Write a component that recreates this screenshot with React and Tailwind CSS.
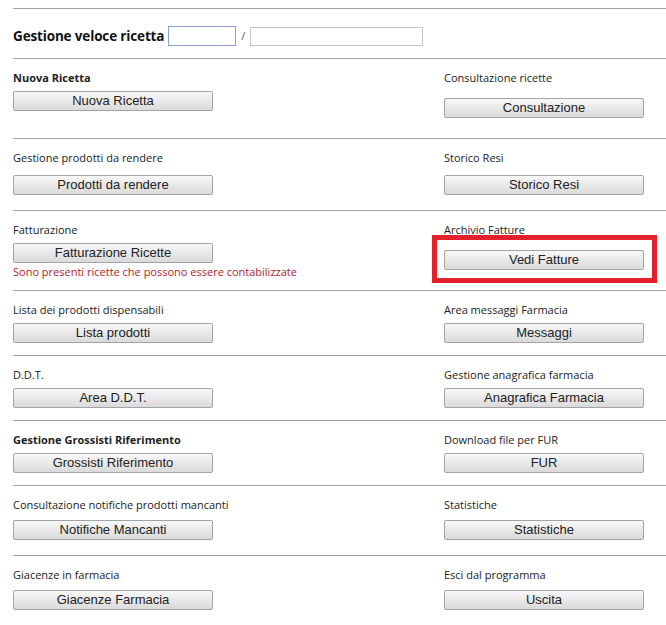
import React from "react";

const rows = [
  {
    h: "h-[80px]",
    left: { label: "Nuova Ricetta", bold: true, btn: "Nuova Ricetta", mt: "mt-[6px]" },
    right: { label: "Consultazione ricette", btn: "Consultazione", mt: "mt-[13px]" },
  },
  {
    h: "h-[72px]",
    left: { label: "Gestione prodotti da rendere", btn: "Prodotti da rendere", mt: "mt-[10px]" },
    right: { label: "Storico Resi", btn: "Storico Resi", mt: "mt-[10px]" },
  },
  {
    h: "h-[80px]",
    left: {
      label: "Fatturazione",
      btn: "Fatturazione Ricette",
      mt: "mt-[6px]",
      note: "Sono presenti ricette che possono essere contabilizzate",
    },
    right: { label: "Archivio Fatture", btn: "Vedi Fatture", mt: "mt-[13px]" },
    highlight: true,
  },
  {
    h: "h-[65px]",
    left: { label: "Lista dei prodotti dispensabili", btn: "Lista prodotti", mt: "mt-[6px]" },
    right: { label: "Area messaggi Farmacia", btn: "Messaggi", mt: "mt-[6px]" },
  },
  {
    h: "h-[65px]",
    left: { label: "D.D.T.", btn: "Area D.D.T.", mt: "mt-[6px]" },
    right: { label: "Gestione anagrafica farmacia", btn: "Anagrafica Farmacia", mt: "mt-[6px]" },
  },
  {
    h: "h-[65px]",
    left: { label: "Gestione Grossisti Riferimento", bold: true, btn: "Grossisti Riferimento", mt: "mt-[6px]" },
    right: { label: "Download file per FUR", btn: "FUR", mt: "mt-[6px]" },
  },
  {
    h: "h-[70px]",
    left: { label: "Consultazione notifiche prodotti mancanti", btn: "Notifiche Mancanti", mt: "mt-[8px]" },
    right: { label: "Statistiche", btn: "Statistiche", mt: "mt-[8px]" },
  },
  {
    h: "h-[70px]",
    left: { label: "Giacenze in farmacia", btn: "Giacenze Farmacia", mt: "mt-[8px]" },
    right: { label: "Esci dal programma", btn: "Uscita", mt: "mt-[8px]" },
  },
];

function Btn({ children, mt }) {
  return (
    <div
      className={`${mt} w-[200px] h-[20px] flex items-center justify-center border border-[#a3a3a3] rounded-[2px] bg-gradient-to-b from-[#f8f8f8] to-[#dadada] text-[13px] leading-[18px] text-[#222] font-['Liberation_Sans',Arial,sans-serif]`}
    >
      {children}
    </div>
  );
}

function Cell({ c }) {
  return (
    <div className="flex flex-col items-start">
      <div
        className={`text-[11px] leading-[14px] text-[#222] ${c.bold ? "font-bold" : "font-normal"}`}
      >
        {c.label}
      </div>
      <Btn mt={c.mt}>{c.btn}</Btn>
      {c.note && (
        <div className="mt-[2px] text-[11px] leading-[14px] text-[#b0232a]">{c.note}</div>
      )}
    </div>
  );
}

export default function App() {
  return (
    <div className="w-[666px] h-[625px] overflow-hidden bg-white pt-[8px] pl-[13px] font-['Open_Sans',sans-serif]">
      <div className="h-[50px] border-t border-[#a0a0a0] pt-[17px]">
        <div className="flex items-center h-[20px]">
          <span className="text-[13.5px] tracking-[-0.15px] font-bold text-[#111] leading-[20px]">
            Gestione veloce ricetta
          </span>
          <input
            type="text"
            className="ml-[4px] w-[68px] h-[20px] border border-[#89a3d6] bg-white outline-none"
          />
          <span className="mx-[5px] text-[11px] text-[#555]">/</span>
          <input
            type="text"
            className="w-[173px] h-[19px] border border-[#c4c4c4] bg-white outline-none"
          />
        </div>
      </div>
      {rows.map((r, i) => (
        <div
          key={i}
          className={`${r.h} relative border-t border-[#a0a0a0] pt-[12px] grid grid-cols-[431px_1fr]`}
        >
          <Cell c={r.left} />
          <Cell c={r.right} />
          {r.highlight && (
            <div className="absolute left-[419px] top-[24px] w-[225px] h-[48px] border-[5px] border-[#e3212b] pointer-events-none" />
          )}
        </div>
      ))}
    </div>
  );
}
